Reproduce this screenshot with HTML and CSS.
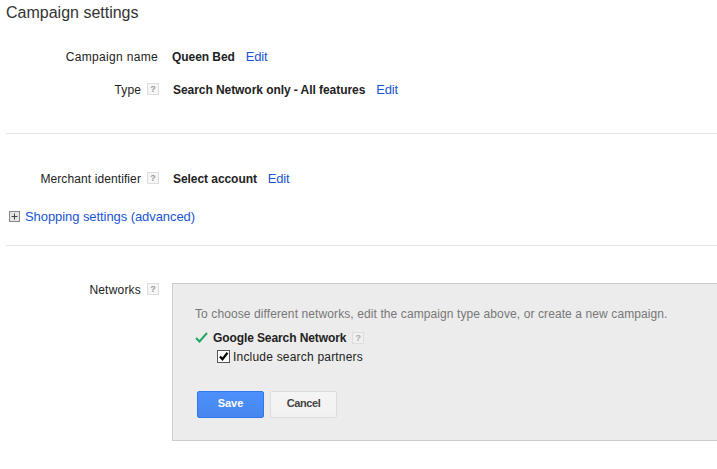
FILE: index.html
```html
<!DOCTYPE html>
<html lang="en">
<head>
<meta charset="utf-8">
<title>Campaign settings</title>
<link rel="stylesheet" href="styles.css">
</head>
<body>
<h1 class="title">Campaign settings</h1>
<section class="group group-first">
  <div class="row row-name">
    <div class="label label-name">Campaign name</div>
    <div class="value"><b>Queen Bed</b><a class="edit" href="#">Edit</a></div>
  </div>
  <div class="row row-type">
    <div class="label">Type<span class="help">?</span></div>
    <div class="value"><b>Search Network only - All features</b><a class="edit" href="#">Edit</a></div>
  </div>
</section>
<hr class="rule rule-one">
<section class="group">
  <div class="row">
    <div class="label">Merchant identifier<span class="help">?</span></div>
    <div class="value"><b>Select account</b><a class="edit" href="#">Edit</a></div>
  </div>
</section>
<div class="shopping">
  <svg class="plus" width="11" height="11" viewBox="0 0 11 11"><rect x="0.5" y="0.5" width="10" height="10" fill="#e4e4e4" stroke="#888"/><path d="M2.5 5.5h6M5.5 2.5v6" stroke="#444" fill="none"/></svg>
  <a href="#">Shopping settings (advanced)</a>
</div>
<hr class="rule rule-two">
<section class="networks">
  <div class="label label-net">Networks<span class="help">?</span></div>
  <div class="panel">
    <p class="note">To choose different networks, edit the campaign type above, or create a new campaign.</p>
    <div class="network">
      <svg class="check" width="13" height="11" viewBox="0 0 13 11"><path d="M1 6l3.5 3.5L12 1" fill="none" stroke="#1fa864" stroke-width="2"/></svg>
      <b class="net-name">Google Search Network</b><span class="help help-light">?</span>
    </div>
    <div class="partners">
      <span class="box"><svg width="11" height="11" viewBox="0 0 11 11"><path d="M2 5.5l2.5 2.7L9.5 1.8" fill="none" stroke="#000" stroke-width="2.2"/></svg></span>Include search partners
    </div>
    <div class="buttons">
      <button class="btn btn-save" type="button">Save</button>
      <button class="btn btn-cancel" type="button">Cancel</button>
    </div>
  </div>
</section>
</body>
</html>
```
FILE: styles.css
```css
html, body { margin: 0; padding: 0; background: #fff; }
body {
  width: 717px;
  height: 469px;
  overflow: hidden;
  font-family: "Liberation Sans", Arial, sans-serif;
  font-size: 12px;
  letter-spacing: 0.1px;
  color: #222;
}
a { color: #1a55d4; text-decoration: none; font-size: 13px; letter-spacing: -0.07px; }
b { font-weight: bold; color: #222; letter-spacing: -0.06px; }
.title {
  margin: 0;
  padding: 3px 0 0 6px;
  font-size: 16px;
  line-height: 19px;
  font-weight: normal;
  letter-spacing: 0;
  color: #333;
}
.group { display: flex; flex-direction: column; }
.group-first { margin-top: 27px; gap: 18px; }
.row { display: flex; align-items: flex-start; height: 15px; }
.label {
  width: 158px;
  flex: none;
  display: flex;
  justify-content: flex-end;
  align-items: flex-start;
  line-height: 15px;
  padding-top: 1px;
}
.label-name { letter-spacing: 0.33px; }
.value { margin-left: 15px; display: flex; align-items: flex-start; line-height: 15px; white-space: nowrap; }
.value b { padding-top: 1px; }
.row-name .value { margin-left: 14px; }
.edit { margin-left: 11px; letter-spacing: -0.2px; }
.help {
  box-sizing: border-box;
  flex: none;
  display: inline-block;
  width: 12px;
  height: 12px;
  margin-left: 6px;
  margin-right: -1px;
  border: 1px solid #ddd;
  background: #f6f6f6;
  color: #999;
  font-size: 9px;
  font-weight: bold;
  line-height: 10px;
  letter-spacing: 0;
  text-align: center;
}
.help-light { color: #aaa; background: #f0f0f0; }
.rule { margin: 0; border: 0; height: 1px; background: #e5e5e5; margin-left: 6px; }
.rule-one { margin-top: 36px; margin-bottom: 37px; }
.shopping {
  display: flex;
  align-items: center;
  margin: 23px 0 0 9px;
  height: 15px;
}
.plus { flex: none; margin-right: 5px; }
.rule-two { margin-top: 21px; }
.networks { display: flex; align-items: flex-start; margin-top: 37px; }
.label-net { margin-top: -1px; letter-spacing: 0.2px; }
.panel {
  box-sizing: border-box;
  flex: none;
  width: 545px;
  height: 158px;
  margin: 0 0 0 14px;
  padding: 23px 0 0 22px;
  background: #ececec;
  border: 1px solid #ccc;
  border-right: 0;
}
.note { margin: 0; line-height: 15px; color: #777; }
.network { display: flex; align-items: center; margin-top: 8px; height: 15px; }
.net-name { letter-spacing: -0.1px; }
.check { margin-right: 5px; flex: none; }
.partners { display: flex; align-items: center; margin: 4px 0 0 22px; height: 15px; letter-spacing: 0.2px; }
.box {
  box-sizing: border-box;
  flex: none;
  display: flex;
  width: 13px;
  height: 13px;
  margin-right: 3px;
  border: 1px solid #555;
  background: #fff;
}
.buttons { display: flex; gap: 6px; margin: 27px 0 0 2px; }
.btn {
  box-sizing: border-box;
  width: 67px;
  height: 27px;
  border-radius: 2px;
  font-family: "Liberation Sans", Arial, sans-serif;
  font-size: 11px;
  font-weight: bold;
  padding: 0 0 3px;
}
.btn-save { color: #fff; background: linear-gradient(#4d90fe, #4787ed); border: 1px solid #3079ed; }
.btn-cancel { color: #444; background: linear-gradient(#f5f5f5, #f1f1f1); border: 1px solid #dcdcdc; letter-spacing: -0.4px; }
```
